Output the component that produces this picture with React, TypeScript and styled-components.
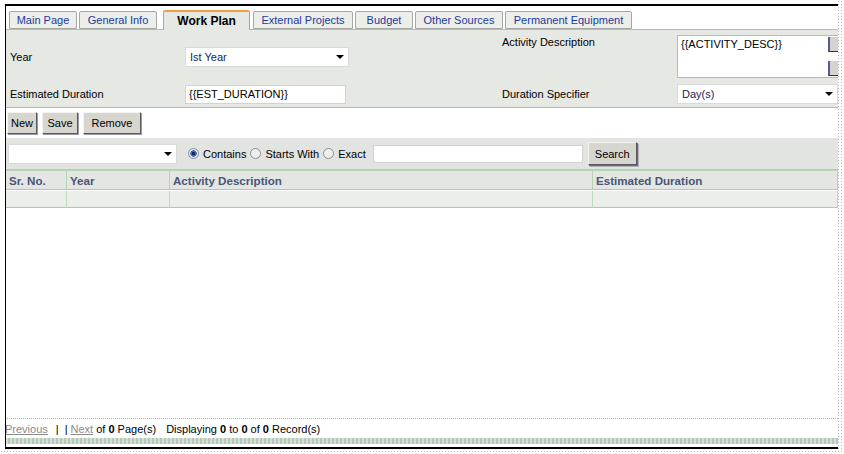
import styled, { createGlobalStyle } from 'styled-components';

const GlobalStyle = createGlobalStyle`
  body {
    margin: 0;
    background: #fff;
    font-family: 'Liberation Sans', Arial, sans-serif;
    font-size: 11px;
    color: #000;
  }
`;

const Page = styled.div`
  display: inline-block;
  padding: 0 6px 5px 0;
  background-color: #fff;
  background-image: radial-gradient(#b8b8b8 0.7px, transparent 0.8px);
  background-size: 3px 3px;
`;

const Canvas = styled.div`
  padding: 4px 0 0 5px;
  background: #fff;
`;

const Window = styled.div`
  width: 833px;
  height: 445px;
  box-sizing: border-box;
  border-top: 2px solid #000;
  border-left: 1px solid #000;
  border-bottom: 2px solid #000;
  background: #fff;
  display: flex;
  flex-direction: column;
  overflow: hidden;
`;

const TabStrip = styled.div`
  display: flex;
  align-items: flex-end;
  padding: 4px 0 0 3px;
  height: 24px;
  box-sizing: border-box;
  border-bottom: 1px solid #b4bcb4;
`;

const Tab = styled.div<{ $active?: boolean; $w: number }>`
  height: ${({ $active }) => ($active ? '20px' : '18px')};
  box-sizing: border-box;
  display: flex;
  align-items: center;
  justify-content: center;
  width: ${({ $w }) => $w}px;
  margin-right: ${({ $active }) => ($active ? '3px' : '2px')};
  margin-left: ${({ $active }) => ($active ? '4px' : '0')};
  margin-bottom: ${({ $active }) => ($active ? '-1px' : '0')};
  border: 1px solid #a4a8a4;
  border-top: ${({ $active }) => ($active ? '2px solid #f0a040' : '1px solid #a4a8a4')};
  border-bottom: ${({ $active }) => ($active ? 'none' : '1px solid #a4a8a4')};
  border-radius: 2px 2px 0 0;
  background: ${({ $active }) => ($active ? '#e6e8e4' : '#eceeea')};
  color: ${({ $active }) => ($active ? '#000' : '#1a3a9e')};
  font-weight: ${({ $active }) => ($active ? 'bold' : 'normal')};
  font-size: ${({ $active }) => ($active ? '12px' : '11px')};
  white-space: nowrap;
`;

const FormPanel = styled.div`
  display: grid;
  grid-template-columns: 175px 317px 175px 1fr;
  grid-template-rows: 43px 20px;
  row-gap: 6px;
  padding: 5px 0 3px 4px;
  background: #e6e8e4;
  border-bottom: 1px solid #a8c4a8;
`;

const Label = styled.div<{ $top?: boolean }>`
  display: flex;
  align-items: ${({ $top }) => ($top ? 'flex-start' : 'center')};
  padding-top: ${({ $top }) => ($top ? '1px' : '0')};
  white-space: nowrap;
`;

const FieldCell = styled.div`
  display: flex;
  align-items: center;
  min-width: 0;
`;

const SelectBox = styled.div<{ $w: number }>`
  width: ${({ $w }) => $w}px;
  height: 20px;
  box-sizing: border-box;
  background: #fff;
  border: 1px solid #d8dcd8;
  display: flex;
  align-items: center;
  justify-content: space-between;
  padding: 0 4px;
  color: #1c2450;
  flex-shrink: 0;
`;

const Arrow = styled.span`
  width: 0;
  height: 0;
  border-left: 4px solid transparent;
  border-right: 4px solid transparent;
  border-top: 4px solid #000;
`;

const TextInput = styled.div<{ $w: number }>`
  width: ${({ $w }) => $w}px;
  height: 19px;
  box-sizing: border-box;
  background: #fff;
  border: 1px solid #d0d4d0;
  display: flex;
  align-items: center;
  padding: 0 3px;
`;

const TextArea = styled.div`
  width: 168px;
  height: 43px;
  box-sizing: border-box;
  background: #fff;
  border: 1px solid #b8bcb8;
  display: flex;
  flex-shrink: 0;
`;

const TextAreaText = styled.div`
  flex: 1;
  padding: 2px 3px;
`;

const ScrollCol = styled.div`
  width: 16px;
  display: flex;
  flex-direction: column;
  justify-content: space-between;
  padding: 1px 0;
`;

const ScrollBtn = styled.div`
  height: 15px;
  box-sizing: border-box;
  background: #d4d4d0;
  border-left: 2px solid #5a5a8a;
  border-bottom: 1px solid #30304a;
`;

const Toolbar = styled.div`
  display: flex;
  gap: 5px;
  padding: 4px 0 4px 1px;
  background: #fff;
`;

const Button = styled.button<{ $w?: number }>`
  height: 22px;
  width: ${({ $w }) => ($w ? `${$w}px` : 'auto')};
  box-sizing: border-box;
  padding: 0 3px;
  font-family: inherit;
  font-size: 11px;
  color: #000;
  background: #d6d6cf;
  border: 1px solid;
  border-color: #f4f4f0 #5a5a62 #5a5a62 #f4f4f0;
  box-shadow: 1px 1px 0 #9a9aa4;
  border-radius: 0;
  cursor: pointer;
`;

const SearchBar = styled.div`
  display: flex;
  align-items: center;
  height: 32px;
  box-sizing: border-box;
  padding: 0 0 0 2px;
  background: #e1e4e0;
  border-bottom: 1px solid #b4ccb4;
`;

const RadioGroup = styled.div`
  display: flex;
  align-items: center;
  margin-left: 11px;
`;

const RadioLabel = styled.label`
  display: flex;
  align-items: center;
  gap: 4px;
  margin-right: 4px;
  white-space: nowrap;
`;

const Radio = styled.span<{ $on?: boolean }>`
  width: 11px;
  height: 11px;
  box-sizing: border-box;
  border-radius: 50%;
  border: 1px solid #8a8e96;
  background: ${({ $on }) =>
    $on ? 'radial-gradient(circle, #1a2a5a 0 1.5px, #3a6ec0 2px 3px, #e8ecf0 3.5px)' : '#eef0ee'};
`;

const SearchInput = styled.div`
  width: 210px;
  height: 18px;
  box-sizing: border-box;
  background: #fff;
  border: 1px solid #d0d4d0;
  margin-left: 3px;
`;

const SearchButton = styled(Button)`
  margin-left: 5px;
  height: 23px;
  box-shadow: 1px 1px 0 #6a6a74, 2px 2px 0 #b0b0b8;
`;

const Grid = styled.div`
  display: grid;
  grid-template-columns: 61px 103px 423px 1fr;
  border-top: 1px solid #b8d8b8;
`;

const HeadCell = styled.div`
  height: 18px;
  display: flex;
  align-items: center;
  padding-left: 3px;
  background: #e3e6e2;
  color: #4a5676;
  font-weight: bold;
  font-size: 11.6px;
  border-right: 1px solid #b4d4b4;
  border-bottom: 1px solid #a8cca8;
  white-space: nowrap;
`;

const BodyCell = styled.div`
  height: 16px;
  margin-top: 1px;
  background: #eceeec;
  border-right: 1px solid #c0dcc0;
  border-bottom: 1px solid #a8cca8;
`;

const Spacer = styled.div`
  flex: 1;
  background: #fff;
`;

const Pager = styled.div`
  border-top: 1px dotted #98c498;
  padding: 4px 0 3px 0;
  margin-left: -1px;
  display: flex;
  align-items: center;
  white-space: nowrap;
`;

const PagerLink = styled.a`
  color: #8a8a8a;
  text-decoration: underline;
`;

const Sep = styled.span`
  margin: 0 3px;
`;

const Gap = styled.span<{ $w: number }>`
  display: inline-block;
  width: ${({ $w }) => $w}px;
`;

const FooterBand = styled.div`
  height: 6px;
  margin-bottom: 3px;
  background: repeating-linear-gradient(90deg, #c8e8c8 0 2px, #c0c0c8 2px 4px);
`;

const tabs = [
  { label: 'Main Page', w: 68 },
  { label: 'General Info', w: 78 },
  { label: 'Work Plan', w: 87, active: true },
  { label: 'External Projects', w: 100 },
  { label: 'Budget', w: 58 },
  { label: 'Other Sources', w: 88 },
  { label: 'Permanent Equipment', w: 127 },
];

export default function App() {
  return (
    <>
      <GlobalStyle />
      <Page>
        <Canvas>
          <Window>
            <TabStrip>
              {tabs.map((t) => (
                <Tab key={t.label} $active={t.active} $w={t.w}>
                  {t.label}
                </Tab>
              ))}
            </TabStrip>

            <FormPanel>
              <Label>Year</Label>
              <FieldCell>
                <SelectBox $w={164}>
                  Ist Year
                  <Arrow />
                </SelectBox>
              </FieldCell>
              <Label $top>Activity Description</Label>
              <FieldCell>
                <TextArea>
                  <TextAreaText>{'{{ACTIVITY_DESC}}'}</TextAreaText>
                  <ScrollCol>
                    <ScrollBtn />
                    <ScrollBtn />
                  </ScrollCol>
                </TextArea>
              </FieldCell>

              <Label>Estimated Duration</Label>
              <FieldCell>
                <TextInput $w={161}>{'{{EST_DURATION}}'}</TextInput>
              </FieldCell>
              <Label>Duration Specifier</Label>
              <FieldCell>
                <SelectBox $w={161}>
                  Day(s)
                  <Arrow />
                </SelectBox>
              </FieldCell>
            </FormPanel>

            <Toolbar>
              <Button $w={30}>New</Button>
              <Button $w={36}>Save</Button>
              <Button $w={58}>Remove</Button>
            </Toolbar>

            <SearchBar>
              <SelectBox $w={169}>
                <span />
                <Arrow />
              </SelectBox>
              <RadioGroup>
                <RadioLabel>
                  <Radio $on />
                  Contains
                </RadioLabel>
                <RadioLabel>
                  <Radio />
                  Starts With
                </RadioLabel>
                <RadioLabel>
                  <Radio />
                  Exact
                </RadioLabel>
              </RadioGroup>
              <SearchInput />
              <SearchButton $w={49}>Search</SearchButton>
            </SearchBar>

            <Grid>
              <HeadCell>Sr. No.</HeadCell>
              <HeadCell>Year</HeadCell>
              <HeadCell>Activity Description</HeadCell>
              <HeadCell>Estimated Duration</HeadCell>
              <BodyCell />
              <BodyCell />
              <BodyCell />
              <BodyCell />
            </Grid>

            <Spacer />

            <Pager>
              <PagerLink>Previous</PagerLink>
              <Gap $w={5} />
              <Sep>|</Sep>
              <Sep>|</Sep>
              <PagerLink>Next</PagerLink>
              &nbsp;of&nbsp;<b>0</b>&nbsp;Page(s)
              <Gap $w={10} />
              Displaying&nbsp;<b>0</b>&nbsp;to&nbsp;<b>0</b>&nbsp;of&nbsp;<b>0</b>&nbsp;Record(s)
            </Pager>
            <FooterBand />
          </Window>
        </Canvas>
      </Page>
    </>
  );
}
